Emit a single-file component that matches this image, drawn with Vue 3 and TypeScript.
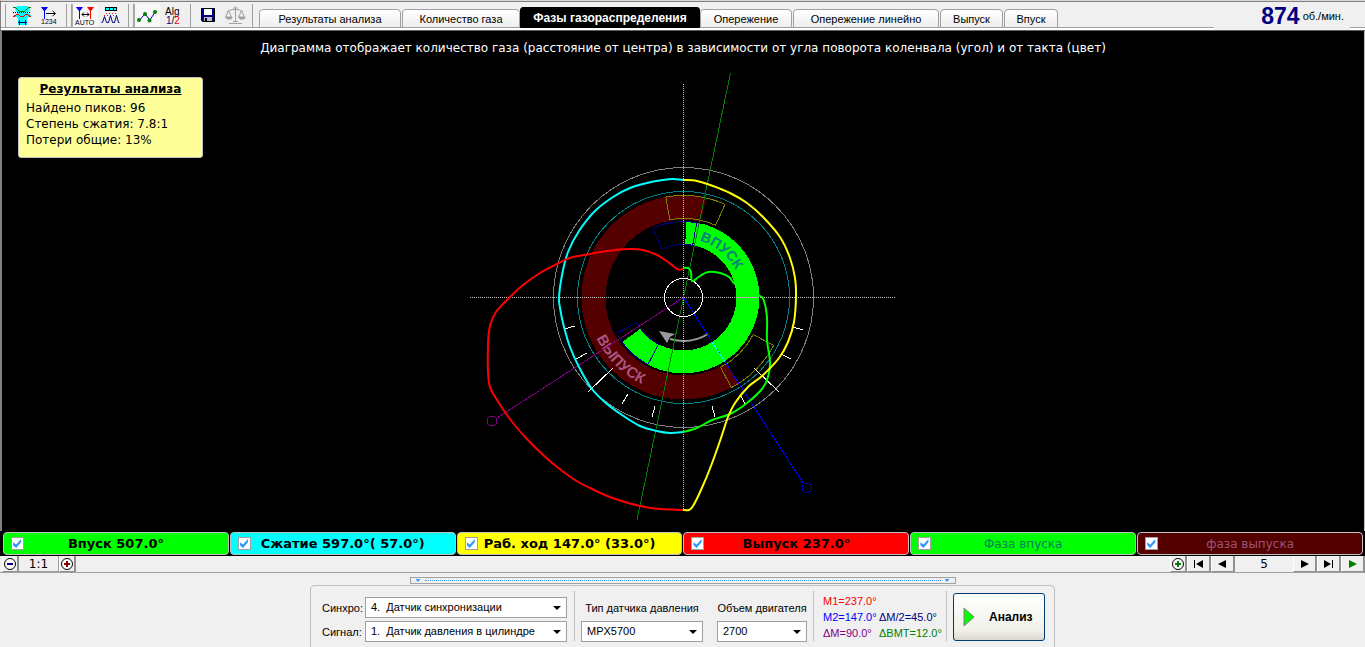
<script setup lang="ts">
import { ref } from 'vue'

interface Tab { id: string; label: string }
interface Phase { id: string; label: string; on: boolean }
interface Trace { color: string; points: number[][] }

const tabs: Tab[] = [
  { id: 'results', label: 'Результаты анализа' },
  { id: 'gas', label: 'Количество газа' },
  { id: 'phases', label: 'Фазы газораспределения' },
  { id: 'advance', label: 'Опережение' },
  { id: 'linear', label: 'Опережение линейно' },
  { id: 'exhaust', label: 'Выпуск' },
  { id: 'intake', label: 'Впуск' },
]
const activeTab = ref<string>('phases')

const phases = ref<Phase[]>([
  { id: 'intake', label: 'Впуск 507.0°', on: true },
  { id: 'compression', label: 'Сжатие 597.0°( 57.0°)', on: true },
  { id: 'stroke', label: 'Раб. ход 147.0° (33.0°)', on: true },
  { id: 'exhaust', label: 'Выпуск 237.0°', on: true },
  { id: 'intake-phase', label: 'Фаза впуска', on: true },
  { id: 'exhaust-phase', label: 'фаза выпуска', on: true },
])

const CX = 683.5
const CY = 297.5

/** Point on a circle around the diagram centre; 0° is right, angles grow clockwise. */
function pt(r: number, deg: number): string {
  const a = (deg * Math.PI) / 180
  return `${(CX + r * Math.cos(a)).toFixed(1)} ${(CY + r * Math.sin(a)).toFixed(1)}`
}

/** Ring sector from angle a to angle b, clockwise. */
function sector(inner: number, outer: number, a: number, b: number): string {
  const large = b - a > 180 ? 1 : 0
  return `M${pt(outer, a)} A${outer} ${outer} 0 ${large} 1 ${pt(outer, b)} L${pt(inner, b)} A${inner} ${inner} 0 ${large} 0 ${pt(inner, a)} Z`
}

/** Smooth curve through all the points (Catmull-Rom as cubic Béziers). */
function smooth(p: number[][]): string {
  let d = `M${p[0][0]} ${p[0][1]}`
  for (let i = 0; i < p.length - 1; i++) {
    const a = p[Math.max(i - 1, 0)]
    const b = p[i]
    const c = p[i + 1]
    const e = p[Math.min(i + 2, p.length - 1)]
    const c1 = [b[0] + (c[0] - a[0]) / 6, b[1] + (c[1] - a[1]) / 6]
    const c2 = [c[0] - (e[0] - b[0]) / 6, c[1] - (e[1] - b[1]) / 6]
    d += ` C${c1.map(v => v.toFixed(1)).join(' ')} ${c2.map(v => v.toFixed(1)).join(' ')} ${c[0]} ${c[1]}`
  }
  return d
}

const traces: Trace[] = [
  { color: '#00ffff', points: [[683, 180], [673, 179], [663, 180], [647, 183], [630, 188], [613, 197], [595, 211], [579, 231], [568, 252], [562, 275], [559, 297], [560, 308], [564, 327], [570, 347], [579, 367], [592, 389], [607, 404], [622, 415], [640, 426], [657, 431], [670, 433], [683, 432]] },
  { color: '#00ff00', points: [[683, 432], [697, 428], [712, 420], [730, 414], [747, 403], [762, 389], [768, 377], [770, 362], [767, 340], [767, 317], [764, 301], [760, 296], [747, 291], [735, 284], [729, 277], [720, 273], [708, 272], [700, 276], [692, 281], [691, 272], [688, 268], [683, 268]] },
  { color: '#ff0000', points: [[683, 269], [677, 269], [668, 262], [657, 255], [643, 250], [628, 249], [607, 251], [590, 254], [570, 258], [557, 264], [540, 273], [523, 285], [510, 297], [496, 312], [490, 326], [488, 345], [489, 383], [499, 403], [513, 423], [527, 439], [541, 453], [557, 467], [575, 480], [592, 489], [610, 497], [628, 503], [645, 507], [660, 509], [683, 510]] },
  { color: '#ffff00', points: [[683, 180], [697, 181], [713, 186], [730, 193], [747, 203], [763, 217], [780, 237], [790, 258], [795, 278], [796, 297], [794, 322], [788, 342], [779, 358], [762, 376], [748, 387], [735, 403], [728, 417], [721, 438], [711, 466], [701, 490], [693, 506], [689, 510], [683, 510]] },
]

const exhaustBand = sector(78, 102, 57, 283)
const intakeBand = sector(53, 76, -88, 144)
const intakeText = `M${pt(59, -74)} A59 59 0 0 1 ${pt(59, 10)}`
const exhaustText = `M${pt(96, 155)} A96 96 0 0 0 ${pt(96, 90)}`
</script>

<template>
  <div class="app">
    <header class="top">
      <div class="tools">
        <div class="group first">
          <button type="button" class="tool" aria-label="Фазы">
            <svg viewBox="10 4 26 24" shape-rendering="crispEdges">
              <path d="M17 6h11l2 3-2 4 3 3-4 2v7H18v-7l-4-2 3-3-2-4z" fill="#00ffff" />
              <path d="M13 7l3 1 3 3h6l3-3 3-1" fill="none" stroke="#008000" />
              <path d="M13 12.500h18" stroke="#000" stroke-dasharray="1 1" />
              <path d="M13 17l3-2 2-1 2 2h4l2-2 2 1 3 2" fill="none" stroke="#f00" />
              <path d="M18 22.500h9M19.500 20v5M25.500 20v5" stroke="#000080" />
            </svg>
          </button>
          <button type="button" class="tool" aria-label="Маркер">
            <svg viewBox="36 4 26 24">
              <path d="M41 7h7l-2.500 3.500h-2z" fill="#00f" />
              <path d="M44.500 9v10" stroke="#00f" />
              <path d="M46 13.500h9M52.500 11l3 2.500-3 2.500" fill="none" stroke="#000" />
              <text x="41" y="24" class="tiny">1234</text>
            </svg>
          </button>
        </div>
        <div class="group">
          <button type="button" class="tool pressed" aria-label="Авто">
            <svg viewBox="72 4 26 24">
              <path d="M76 7h7l-2.500 3.500h-2z" fill="#00f" /><path d="M79.500 9v10" stroke="#00f" />
              <path d="M87 7h7l-2.500 3.500h-2z" fill="#f00" /><path d="M90.500 9v10" stroke="#f00" />
              <path d="M82 14.500h7M84 12.500l-2 2 2 2M87 12.500l2 2-2 2" fill="none" stroke="#000" />
              <text x="75" y="25" class="tiny">AUTO</text>
            </svg>
          </button>
          <button type="button" class="tool" aria-label="Пики">
            <svg viewBox="98 4 26 24">
              <rect x="105.500" y="7.500" width="11" height="3" fill="#00ffff" stroke="#000" />
              <path d="M109.500 8v3M113.500 8v3" stroke="#000" />
              <path d="M106 13.500h10M104 15.500h14" stroke="#d02020" stroke-dasharray="1 2" />
              <path d="M101.500 22.500h1l2-6 2 6h2l2-7 2 7h2l2-7 2 7h1" fill="none" stroke="#000080" />
            </svg>
          </button>
        </div>
        <div class="group">
          <button type="button" class="tool pressed" aria-label="График">
            <svg viewBox="134 4 26 24">
              <path d="M139 20.500l6-6.500 5 6 5-8" fill="none" stroke="#0000c0" />
              <g fill="#008000"><circle cx="139" cy="20" r="2" /><circle cx="145" cy="14" r="2" /><circle cx="149.500" cy="20.500" r="2" /><circle cx="155" cy="12" r="2" /></g>
            </svg>
          </button>
          <button type="button" class="tool" aria-label="Алгоритм">
            <svg viewBox="160 4 26 24">
              <text x="165" y="15" class="alg">Alg</text>
              <text x="166" y="24" class="alg"><tspan fill="#000080">1</tspan>/<tspan fill="#f00">2</tspan></text>
            </svg>
          </button>
        </div>
        <div class="group last">
          <button type="button" class="tool" aria-label="Сохранить">
            <svg viewBox="195 4 26 24">
              <path d="M201.500 8.500h13v13h-12l-1-1z" fill="#000080" stroke="#000" />
              <rect x="204" y="9" width="8" height="6" fill="#fff" />
              <rect x="204" y="17" width="8" height="4" fill="#c0c0c0" /><rect x="205" y="18" width="2" height="3" fill="#000" />
            </svg>
          </button>
          <button type="button" class="tool" aria-label="Сравнить">
            <svg viewBox="221 4 26 24">
              <g fill="none" stroke="#a0a0a0">
                <path d="M235.500 8v14M227 11.500l5-2h6l5 2M229 23.500h13M233 21.500h5" />
                <circle cx="235.500" cy="8.500" r="1.500" />
                <path d="M228.500 11l-3 6h6zM241.500 11l-3 6h6z" />
              </g>
              <path d="M225 17h8l-2 2.500h-4zM238 17h8l-2 2.500h-4z" fill="#a0a0a0" />
            </svg>
          </button>
        </div>
      </div>
      <nav class="tabs" role="tablist">
        <button
          v-for="t in tabs" :key="t.id" type="button" role="tab"
          :class="['tab', t.id, { active: t.id === activeTab }]"
          :aria-selected="t.id === activeTab" @click="activeTab = t.id"
        >{{ t.label }}</button>
      </nav>
      <div class="rpm"><strong>874</strong><span>об./мин.</span></div>
      <div class="tail"></div>
    </header>

    <main class="chart">
      <p class="caption">Диаграмма отображает количество газа (расстояние от центра) в зависимости от угла поворота коленвала (угол) и от такта (цвет)</p>
      <aside class="summary">
        <h2>Результаты анализа</h2>
        <p>Найдено пиков: 96</p>
        <p>Степень сжатия: 7.8:1</p>
        <p>Потери общие: 13%</p>
      </aside>
      <svg class="diagram" viewBox="469 72 428 450" role="img" aria-label="Круговая диаграмма фаз">
        <defs>
          <path id="intake-arc" :d="intakeText" />
          <path id="exhaust-arc" :d="exhaustText" />
        </defs>
        <g shape-rendering="crispEdges">
          <path :d="exhaustBand" fill="#550000" />
          <path :d="intakeBand" fill="#00ff00" />
          <g fill="none">
            <circle :cx="CX" :cy="CY" r="130" stroke="#808080" />
            <circle :cx="CX" :cy="CY" r="106" stroke="#008080" />
            <path :d="sector(79, 102, -100, -66)" stroke="#808000" />
            <path :d="sector(79, 102, 28, 62)" stroke="#808000" />
            <path :d="sector(53, 76, -114, -80)" stroke="#000080" />
            <path :d="sector(53, 76, 118, 152)" stroke="#000080" />
          </g>
        </g>
        <text class="arc-label" fill="#008080"><textPath href="#intake-arc">ВПУСК</textPath></text>
        <text class="arc-label wide" fill="#aa5580"><textPath href="#exhaust-arc">ВЫПУСК</textPath></text>
        <path d="M708 334Q690 345 670 339" fill="none" stroke="#999aa0" stroke-width="2" />
        <path d="M659 331l16 3-5 3-3 6z" fill="#999aa0" />
        <g fill="none" shape-rendering="crispEdges">
          <path stroke="#fff" d="M564 329l11-3M576 359l11-6M588 392l25-24M622 404l6-10M652 417l3-11M712 406l3 11M740 394l5 10M754 368l25 24M781 354l10 5M793 327l10 3" />
          <path stroke="#c8c8c8" stroke-dasharray="1 1" d="M470 297.500H896M683.500 84V510" />
          <path stroke="#800080" d="M683.500 297.500L497 418" /><circle cx="492" cy="421" r="5" stroke="#800080" />
          <path stroke="#0000ff" d="M683.500 297.500L803 483" /><circle cx="807" cy="488" r="5" stroke="#0000c0" />
          <path stroke="#00ffff" d="M712 342l13 20" />
          <path stroke="#008000" d="M730.500 73L637 520" />
          <circle :cx="CX" :cy="CY" r="19" stroke="#fff" />
        </g>
        <g class="trace">
          <path v-for="t in traces" :key="t.color" :stroke="t.color" :d="smooth(t.points)" />
        </g>
      </svg>
    </main>

    <section class="legend">
      <label v-for="p in phases" :key="p.id" :class="['phase', p.id]">
        <input v-model="p.on" type="checkbox"><span>{{ p.label }}</span>
      </label>
    </section>

    <section class="strip">
      <button type="button" class="zoom" aria-label="Уменьшить">
        <svg viewBox="0 0 14 14"><circle cx="7" cy="7" r="5.500" fill="#fff" stroke="#000" /><path d="M4 7h6" stroke="#000080" stroke-width="2" /></svg>
      </button>
      <output class="scale">1:1</output>
      <button type="button" class="zoom" aria-label="Увеличить">
        <svg viewBox="0 0 14 14"><circle cx="7" cy="7" r="5.500" fill="#fff" stroke="#000" /><path d="M4 7h6M7 4v6" stroke="#800000" stroke-width="2" /></svg>
      </button>
      <span class="spacer"></span>
      <button type="button" class="zoom" aria-label="Добавить">
        <svg viewBox="0 0 14 14"><circle cx="7" cy="7" r="5.500" fill="#fff" stroke="#000" /><path d="M4 7h6M7 4v6" stroke="#008000" stroke-width="2" /></svg>
      </button>
      <button type="button" class="step" aria-label="В начало"><svg viewBox="0 0 14 14"><path d="M2 3h1v8H2zM11 3v8L4 7z" /></svg></button>
      <button type="button" class="step" aria-label="Назад"><svg viewBox="0 0 14 14"><path d="M10 3v8L2 7z" /></svg></button>
      <output class="frame">5</output>
      <button type="button" class="step" aria-label="Вперёд"><svg viewBox="0 0 14 14"><path d="M3 3v8l8-4z" /></svg></button>
      <button type="button" class="step" aria-label="В конец"><svg viewBox="0 0 14 14"><path d="M2 3v8l7-4zM10 3h1v8h-1z" /></svg></button>
      <button type="button" class="step play" aria-label="Пуск"><svg viewBox="0 0 14 14"><path d="M3 3v8l8-4z" /></svg></button>
    </section>

    <footer class="bottom">
      <div class="splitter"><i></i><b></b><i></i></div>
      <form class="panel" @submit.prevent>
        <div class="channels">
          <label for="sync">Синхро:</label>
          <div class="drop"><select id="sync"><option>4.&nbsp; Датчик синхронизации</option></select></div>
          <label for="signal">Сигнал:</label>
          <div class="drop"><select id="signal"><option>1.&nbsp; Датчик давления в цилиндре</option></select></div>
        </div>
        <div class="rule"></div>
        <div class="field sensor">
          <label for="sensor">Тип датчика давления</label>
          <div class="drop"><select id="sensor"><option>MPX5700</option></select></div>
        </div>
        <div class="field volume">
          <label for="volume">Объем двигателя</label>
          <div class="drop"><select id="volume"><option>2700</option></select></div>
        </div>
        <div class="rule"></div>
        <div class="marks">
          <span class="m1">M1=237.0°</span><span></span>
          <span class="m2">M2=147.0°</span><span class="half">ΔM/2=45.0°</span>
          <span class="dm">ΔM=90.0°</span><span class="bmt">ΔBMT=12.0°</span>
        </div>
        <div class="rule"></div>
        <button type="submit" class="run">
          <svg viewBox="0 0 12 20"><path d="M1 1v18l10-9z" fill="#00ff00" stroke="#808080" /></svg>
          <span>Анализ</span>
        </button>
      </form>
    </footer>
  </div>
</template>

<style>
body { margin: 0; background: #f0f0f0; }
</style>

<style scoped>
* { box-sizing: border-box; }
.app {
  display: flex; flex-direction: column; min-height: 100vh;
  background: #f0f0f0; color: #000;
  font: 11px/14px "Liberation Sans", Arial, sans-serif;
}
button, select { font: inherit; color: inherit; margin: 0; padding: 0; border: 0; background: none; border-radius: 0; }
p, h2 { margin: 0; }
svg { display: block; }

.top { display: flex; height: 31px; border-top: 1px solid #d8d8d8; border-bottom: 1px solid #606060; border-left: 1px solid #808080; box-shadow: inset 0 1px #808080; background: #f0f0f0; }
.tools { display: flex; gap: 4px; padding: 3px 6px 2px 4px; border-bottom: 2px solid #fff; box-shadow: inset 0 -1px #a0a0a0; }
.group { display: flex; height: 23px; padding-right: 4px; border-left: 1px solid #a0a0a0; border-right: 1px solid #a0a0a0; }
.group.first { padding-left: 4px; }
.group.last { margin-left: -4px; padding: 0 5px 0 4px; border-left: 0; }
.tool { width: 26px; height: 23px; }
.tool svg { width: 26px; height: 24px; }
.tool.pressed { background: #f8f8f8; border-left: 1px solid #b0b0b0; }
.tool.pressed svg { margin-left: -1px; }
.tiny { font: 7px "Liberation Sans", sans-serif; }
.alg { font: 10px "Liberation Sans", sans-serif; }
.tabs { display: flex; flex: 1; align-items: flex-end; gap: 1px; border-bottom: 2px solid #fff; box-shadow: inset 0 -1px #a0a0a0; }
.tab { height: 19px; padding: 1px 0 0; white-space: nowrap; border: 1px solid #a0a0a0; border-radius: 4px 4px 0 0; background: linear-gradient(#fff, #eee); }
.tab.active { height: 21px; font-size: 12px; font-weight: bold; color: #fff; background: #000; border-color: #000; margin: 0 -1px; padding: 0; border-radius: 3px 3px 0 0; }
.tab.results { width: 142px; }
.tab.gas { width: 118px; }
.tab.phases { width: 180px; }
.tab.advance { width: 92px; }
.tab.linear { width: 146px; }
.tab.exhaust { width: 63px; }
.tab.intake { width: 54px; }
.rpm { display: flex; align-items: center; justify-content: flex-end; width: 136px; padding: 0 6px 0 0; gap: 3px; }
.rpm strong { font-size: 23px; line-height: 26px; color: #000080; }
.tail { width: 15px; border-bottom: 2px solid #fff; box-shadow: inset 0 -1px #a0a0a0; }

.chart { position: relative; flex: 1; display: flex; flex-direction: column; align-items: center; padding-bottom: 9px; background: #000; border-left: 2px solid #808080; border-right: 1px solid #c0c0c0; color: #fff; font: 12px/16px "DejaVu Sans", Verdana, sans-serif; }
.caption { padding: 9px 0 16px; text-align: center; }
.diagram { width: 428px; height: 450px; flex: none; }
.trace { fill: none; stroke-width: 2; stroke-linejoin: round; }
.arc-label { font: bold 14px "Liberation Sans", Arial, sans-serif; }
.arc-label.wide { font-size: 15px; }
.summary { position: absolute; left: 16px; top: 46px; width: 185px; height: 81px; padding: 3px 7px; color: #000; background: #ffff99; border: 1px solid #c0c0c0; border-radius: 3px; }
.summary h2 { margin-bottom: 3px; font: bold 12px/16px "DejaVu Sans", Verdana, sans-serif; text-align: center; text-decoration: underline; white-space: nowrap; }

.legend { display: grid; grid-template-columns: repeat(6, 1fr); gap: 1px; padding: 1px 2px 1px 3px; background: #000; }
.phase { display: flex; align-items: center; height: 23px; padding: 0 7px; border: 1px solid #c0c0c0; border-radius: 4px; font: bold 13px/16px "DejaVu Sans", Verdana, sans-serif; }
.phase span { flex: 1; text-align: center; padding-right: 13px; white-space: nowrap; }
.phase input { appearance: none; position: relative; flex: none; width: 13px; height: 13px; margin: 0; background: #fff; border: 1px solid #a0a0a0; }
.phase input:checked::before { content: ""; display: block; width: 9px; height: 9px; margin: 1px; background: #3399ff; clip-path: polygon(0 35%, 35% 60%, 90% 0, 90% 35%, 35% 100%, 0 70%); }
.phase.intake { background: #00ff00; }
.phase.compression { background: #00ffff; }
.phase.stroke { background: #ffff00; }
.phase.exhaust { background: #ff0000; }
.phase.intake-phase { background: #00ff00; color: #008060; font-weight: normal; font-size: 12px; }
.phase.exhaust-phase { background: #550000; color: #995577; font-weight: normal; font-size: 12px; }

.strip { display: flex; height: 17px; padding-left: 2px; border-bottom: 1px solid #a0a0a0; font: 12px/16px "DejaVu Sans", Verdana, sans-serif; }
.strip button { display: flex; align-items: center; justify-content: center; height: 16px; border-right: 2px solid #909090; border-bottom: 1px solid #909090; border-left: 1px solid #fff; }
.strip svg { width: 14px; height: 14px; }
.zoom { width: 17px; }
.step { width: 24px; }
.play { fill: #008000; }
.scale { width: 40px; text-align: center; border-right: 1px solid #a0a0a0; border-bottom: 1px solid #a0a0a0; }
.frame { width: 58px; text-align: center; }
.spacer { flex: 1; }

.bottom { display: flex; flex-direction: column; align-items: center; padding-top: 4px; }
.splitter { display: flex; align-items: center; gap: 4px; width: 40%; height: 7px; padding: 0 5px; border: 1px solid #a0a0a0; }
.splitter b { flex: 1; height: 1px; border-top: 1px dotted #3399ff; }
.splitter i { width: 5px; height: 3px; background: #3399ff; clip-path: polygon(0 0, 100% 0, 50% 100%); }
.panel { display: flex; height: 63px; margin-top: 1px; padding: 5px 9px 0 11px; border: 1px solid #c0c0c0; border-bottom: 0; border-radius: 5px 5px 0 0; }
.channels { display: grid; grid-template-columns: 43px 202px; gap: 3px 0; align-items: center; align-content: start; padding-top: 6px; }
label { white-space: nowrap; }
.drop { position: relative; }
.drop::after { content: ""; position: absolute; right: 6px; top: 9px; width: 8px; height: 4px; background: #000; clip-path: polygon(0 0, 100% 0, 50% 100%); pointer-events: none; }
.drop select { display: block; appearance: none; width: 100%; height: 21px; padding: 0 18px 2px 5px; background: #fff; border: 1px solid #a0a0a0; }
.rule { width: 1px; height: 50px; margin: 0 6px; background: #c0c0c0; }
.channels + .rule { margin-left: 7px; }
.field { display: flex; flex-direction: column; gap: 5px; padding-top: 10px; }
.field label { line-height: 15px; text-align: center; }
.sensor { width: 122px; }
.volume { width: 90px; margin-left: 14px; }
.marks { display: grid; grid-template-columns: 56px 61px; grid-auto-rows: 16px; padding: 2px 0 0 3px; line-height: 16px; white-space: nowrap; }
.m1 { color: #f00; }
.m2 { color: #00f; }
.half { color: #000080; }
.dm { color: #800080; }
.bmt { color: #008000; }
.run { display: flex; align-items: center; gap: 14px; width: 92px; height: 48px; margin-top: 2px; padding: 0 10px 0 9px; border: 1px solid #003c74; border-radius: 3px; background: linear-gradient(#fff, #f0f0e8 80%, #dcd8d0); font-size: 12px; font-weight: bold; }
.run svg { width: 12px; height: 20px; }
</style>
